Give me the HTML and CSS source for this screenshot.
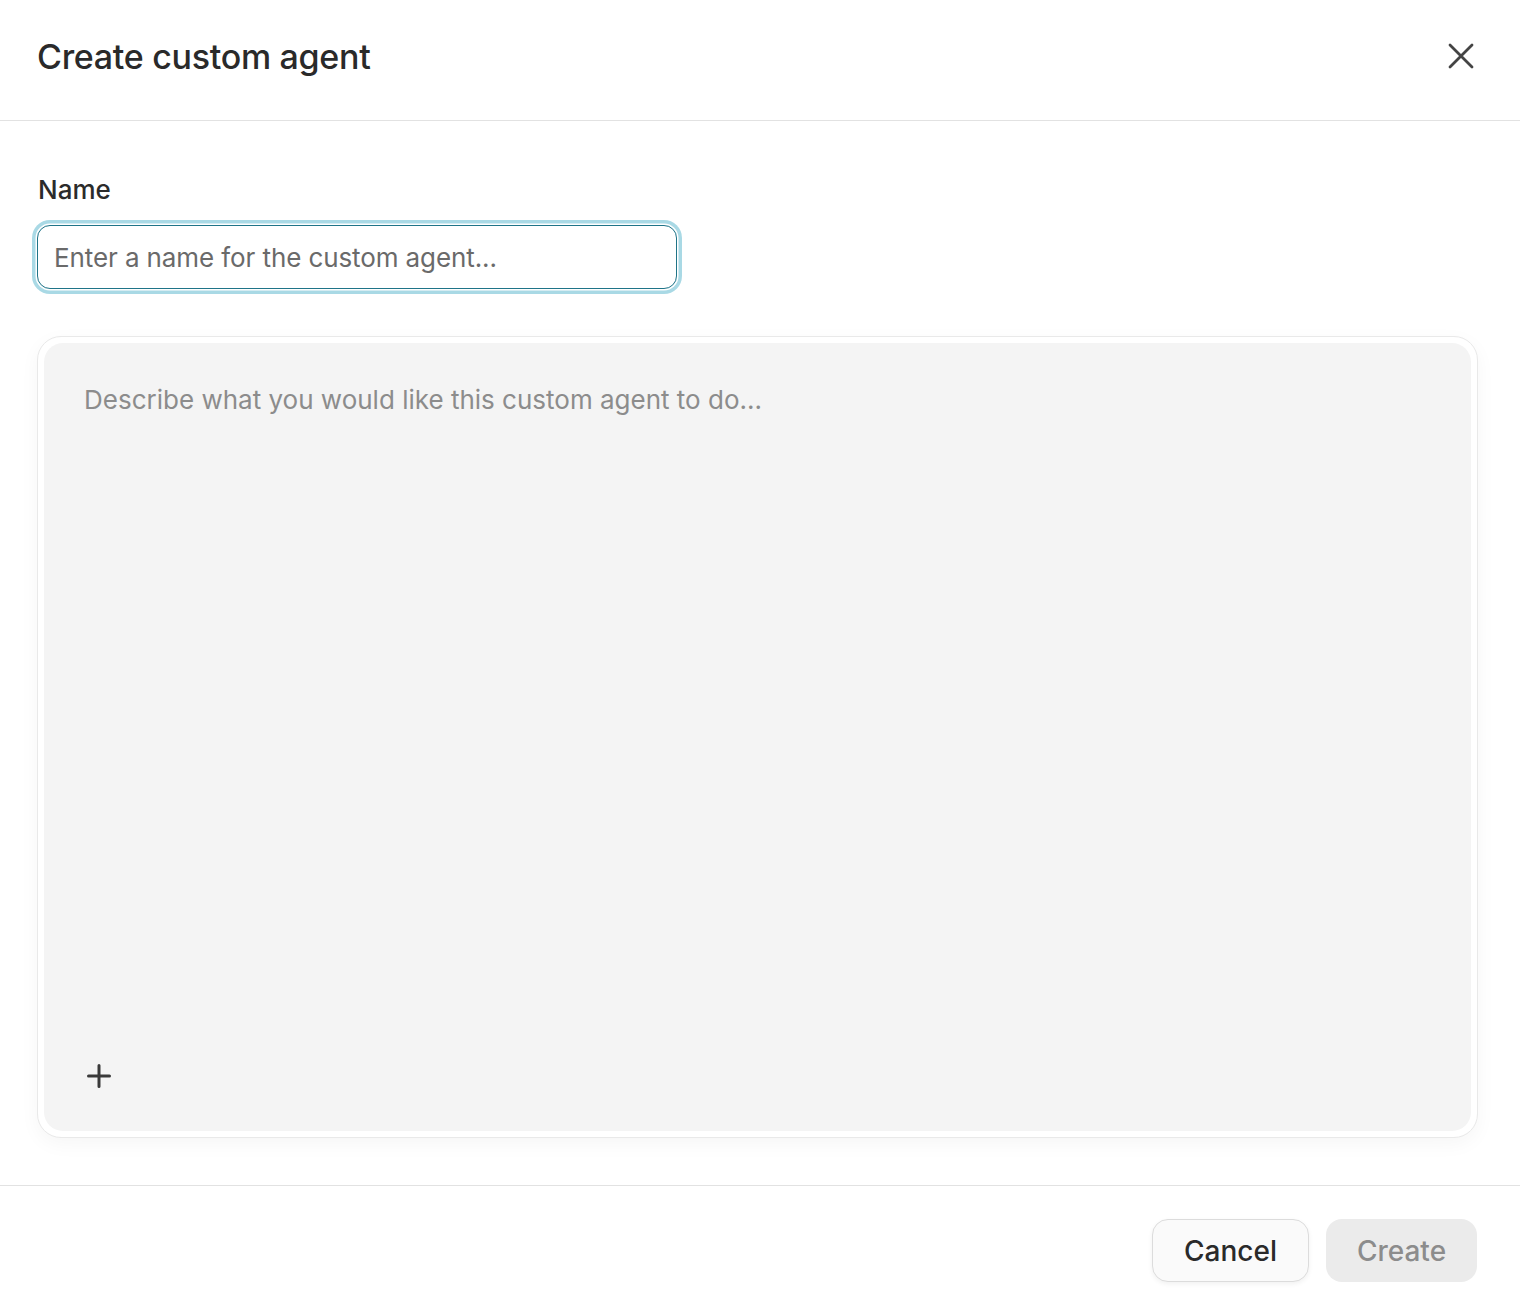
FILE: index.html
```html
<!DOCTYPE html>
<html lang="en">
<head>
<meta charset="utf-8">
<title>Create custom agent</title>
<link rel="stylesheet" href="styles.css">
</head>
<body>
<div class="dialog">
  <header class="dialog-header">
    <h1 class="dialog-title">Create custom agent</h1>
    <button class="close-btn" aria-label="Close">
      <svg width="28" height="28" viewBox="0 0 28 28" fill="none" stroke="#444" stroke-width="2.8" stroke-linecap="round"><path d="M3 3L25 25M25 3L3 25"/></svg>
    </button>
  </header>
  <main class="dialog-body">
    <label class="field-label" for="name">Name</label>
    <div class="name-input">
      <span class="placeholder">Enter a name for the custom agent...</span>
    </div>
    <div class="prompt-card">
      <div class="prompt-inner">
        <div class="prompt-placeholder">Describe what you would like this custom agent to do...</div>
        <button class="plus-btn" aria-label="Add">
          <svg width="26" height="26" viewBox="0 0 26 26" fill="none" stroke="#3a3a3a" stroke-width="3" stroke-linecap="round"><path d="M13 2.5V23.5M2.5 13H23.5"/></svg>
        </button>
      </div>
    </div>
  </main>
  <footer class="dialog-footer">
    <button class="btn btn-cancel">Cancel</button>
    <button class="btn btn-create">Create</button>
  </footer>
</div>
</body>
</html>
```
FILE: styles.css
```css
* { box-sizing: border-box; }
html, body { margin: 0; padding: 0; background: #fff; }
body {
  font-family: Inter, "Noto Sans", "Liberation Sans", sans-serif;
  color: #2b2b2b;
  width: 1520px;
  height: 1310px;
  overflow: hidden;
}
.dialog { display: flex; flex-direction: column; height: 1310px; }
.dialog-header {
  height: 121px;
  border-bottom: 1px solid #e2e2e2;
  display: flex;
  align-items: center;
  justify-content: space-between;
  padding: 0 45px 0 37px;
}
.dialog-title {
  margin: 0;
  font-size: 34px;
  font-weight: 500;
  letter-spacing: -0.3px;
  color: #2a2a2a;
  margin-top: -8px;
}
.close-btn {
  border: 0; background: none; padding: 0; width: 28px; height: 28px;
  display: flex; margin-top: -8px;
}
.dialog-body {
  flex: 1;
  padding: 54px 42px 0 37px;
  display: flex;
  flex-direction: column;
}
.field-label {
  font-size: 26px;
  font-weight: 500;
  color: #2b2b2b;
  line-height: 30px;
  margin-left: 1px;
}
.name-input {
  margin-top: 20px;
  width: 640px;
  height: 64px;
  border: 1.5px solid #1f7488;
  border-radius: 13px;
  box-shadow: 0 0 0 1.5px #fff, 0 0 0 5px #a9d9e5;
  display: flex;
  align-items: center;
  padding-left: 16px;
}
.placeholder {
  font-size: 26px;
  color: #6a6a6a;
  letter-spacing: -0.1px;
}
.prompt-card {
  margin-top: 47px;
  height: 802px;
  border: 1px solid #e9e9e9;
  border-radius: 24px;
  padding: 6px;
  background: #fff;
  box-shadow: 0 6px 20px rgba(0,0,0,0.04);
}
.prompt-inner {
  height: 100%;
  background: #f4f4f4;
  border-radius: 19px;
  display: flex;
  flex-direction: column;
  justify-content: space-between;
  padding: 40px 40px 42px 40px;
}
.prompt-placeholder {
  font-size: 26px;
  color: #8c8c8c;
  letter-spacing: 0;
  margin-top: 1px;
}
.plus-btn {
  border: 0; background: none; padding: 0; width: 26px; height: 26px;
  display: flex; margin-left: 2px;
}
.dialog-footer {
  height: 125px;
  border-top: 1px solid #e2e2e2;
  display: flex;
  justify-content: flex-end;
  align-items: flex-start;
  gap: 17px;
  padding: 33px 43px 0 0;
}
.btn {
  font-family: Inter, "Noto Sans", "Liberation Sans", sans-serif;
  font-size: 28px;
  font-weight: 500;
  height: 63px;
  border-radius: 16px;
  padding: 0;
}
.btn-cancel {
  background: #fafafa;
  border: 1px solid #dcdcdc;
  color: #2a2a2a;
  box-shadow: 0 2px 5px rgba(0,0,0,0.06);
  width: 157px;
}
.btn-create {
  background: #ebebeb;
  border: 0;
  color: #8c8c8c;
  width: 151px;
}
```
